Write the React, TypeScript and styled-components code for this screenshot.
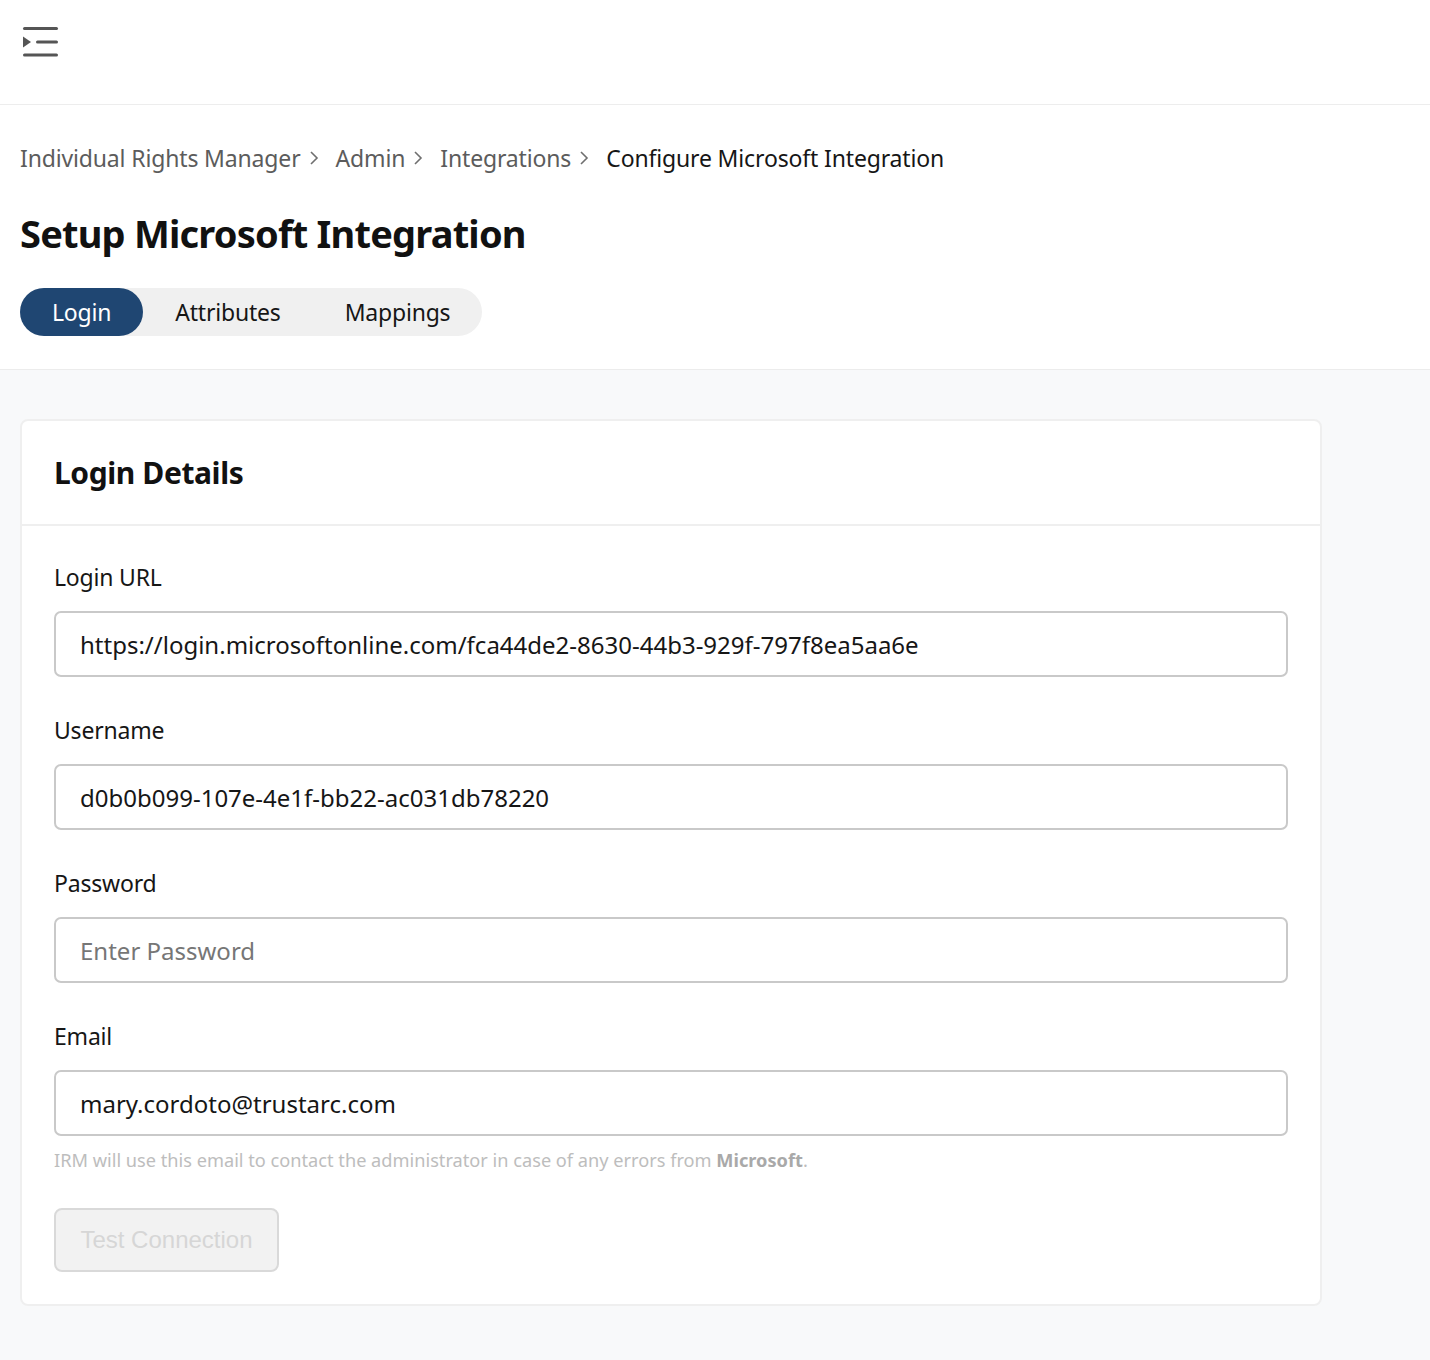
import styled, { createGlobalStyle } from 'styled-components';

const GlobalStyle = createGlobalStyle`
  html, body {
    margin: 0;
    padding: 0;
    background: #f8f9fa;
  }
  body {
    font-family: 'Noto Sans', 'Liberation Sans', sans-serif;
    color: #161616;
  }
  * {
    box-sizing: border-box;
  }
`;

const Page = styled.div`
  min-height: 1360px;
  display: flex;
  flex-direction: column;
  background: #f8f9fa;
`;

const TopBar = styled.header`
  height: 105px;
  background: #fff;
  border-bottom: 1px solid #ededed;
  display: flex;
  align-items: flex-start;
  padding: 24px 0 0 20px;
`;

const MenuButton = styled.button`
  width: 42px;
  height: 36px;
  padding: 0;
  border: none;
  background: transparent;
  cursor: pointer;
`;

const PageHead = styled.section`
  background: #fff;
  border-bottom: 1px solid #ececec;
  padding: 37px 20px 33px;
  display: flex;
  flex-direction: column;
  align-items: flex-start;
`;

const Crumbs = styled.nav`
  display: flex;
  align-items: center;
  height: 32px;
  font-size: 23px;
  letter-spacing: -0.15px;
  line-height: 32px;
`;

const Crumb = styled.a<{ current?: boolean }>`
  color: ${({ current }) => (current ? '#161616' : '#5c5c5c')};
  text-decoration: none;
  white-space: nowrap;
`;

const Chevron = styled.span`
  display: inline-flex;
  margin: 0 17px 0 8px;
  color: #6f6f6f;
`;

const Title = styled.h1`
  margin: 35px 0 0;
  font-size: 38px;
  letter-spacing: -0.8px;
  line-height: 48px;
  font-weight: 700;
  color: #111;
`;

const Tabs = styled.div`
  margin-top: 31px;
  display: flex;
  background: #f0f0f0;
  border-radius: 24px;
  height: 48px;
`;

const Tab = styled.button<{ active?: boolean }>`
  height: 48px;
  padding: 0 32px;
  border: none;
  border-radius: 24px;
  font-family: inherit;
  font-size: 23px;
  letter-spacing: -0.2px;
  cursor: pointer;
  background: ${({ active }) => (active ? '#1f4672' : 'transparent')};
  color: ${({ active }) => (active ? '#fff' : '#161616')};
`;

const Content = styled.main`
  padding: 49px 108px 56px 20px;
`;

const Card = styled.section`
  background: #fff;
  border: 2px solid #efefef;
  border-radius: 8px;
`;

const CardHeader = styled.div`
  height: 105px;
  padding: 0 32px;
  display: flex;
  align-items: center;
  border-bottom: 2px solid #efefef;
`;

const CardTitle = styled.h2`
  margin: 0;
  font-size: 30px;
  letter-spacing: -0.4px;
  font-weight: 700;
  color: #111;
`;

const CardBody = styled.div`
  padding: 35px 32px 32px;
  display: flex;
  flex-direction: column;
`;

const Field = styled.div`
  display: flex;
  flex-direction: column;
  & + & {
    margin-top: 37px;
  }
`;

const Label = styled.label`
  font-size: 23px;
  letter-spacing: -0.2px;
  line-height: 32px;
  color: #161616;
  margin-bottom: 18px;
`;

const Input = styled.input`
  height: 66px;
  width: 100%;
  border: 2px solid #c9c9c9;
  border-radius: 7px;
  padding: 0 24px;
  font-family: inherit;
  font-size: 24px;
  color: #161616;
  background: #fff;
  outline: none;
  &::placeholder {
    color: #767676;
  }
`;

const Hint = styled.p`
  margin: 12px 0 0;
  font-size: 18.2px;
  line-height: 24px;
  color: #bdbdbd;
  b {
    color: #a9a9a9;
    font-weight: 700;
  }
`;

const TestButton = styled.button`
  margin-top: 36px;
  align-self: flex-start;
  width: 225px;
  height: 64px;
  border: 2px solid #d9d9d9;
  border-radius: 8px;
  background: #f2f2f2;
  color: #d6d6d6;
  font-family: 'Liberation Sans', Arial, sans-serif;
  font-size: 24px;
  cursor: not-allowed;
`;

const MenuIcon = () => (
  <svg width='42' height='36' viewBox='0 0 42 36'>
    <g stroke='#555' strokeWidth='3' strokeLinecap='round' fill='none'>
      <line x1='4.5' y1='4.5' x2='36.5' y2='4.5' />
      <line x1='17.5' y1='18' x2='36.5' y2='18' />
      <line x1='4.5' y1='31' x2='36.5' y2='31' />
    </g>
    <path d='M3 12.5 L11 18 L3 23.5 Z' fill='#555' />
  </svg>
);

const ChevronIcon = () => (
  <svg width='10' height='16' viewBox='0 0 10 16'>
    <path d='M2 2 L8 8 L2 14' stroke='currentColor' strokeWidth='1.6' fill='none' />
  </svg>
);

const crumbs = ['Individual Rights Manager', 'Admin', 'Integrations'];

const fields = [
  { label: 'Login URL', value: 'https://login.microsoftonline.com/fca44de2-8630-44b3-929f-797f8ea5aa6e' },
  { label: 'Username', value: 'd0b0b099-107e-4e1f-bb22-ac031db78220' },
  { label: 'Password', value: '', placeholder: 'Enter Password', type: 'password' },
  { label: 'Email', value: 'mary.cordoto@trustarc.com' },
];

const App = () => {
  return (
    <Page>
      <GlobalStyle />
      <TopBar>
        <MenuButton aria-label='Toggle menu'>
          <MenuIcon />
        </MenuButton>
      </TopBar>
      <PageHead>
        <Crumbs>
          {crumbs.map((c) => (
            <span key={c} style={{ display: 'contents' }}>
              <Crumb href='#'>{c}</Crumb>
              <Chevron>
                <ChevronIcon />
              </Chevron>
            </span>
          ))}
          <Crumb current>Configure Microsoft Integration</Crumb>
        </Crumbs>
        <Title>Setup Microsoft Integration</Title>
        <Tabs>
          <Tab active>Login</Tab>
          <Tab>Attributes</Tab>
          <Tab>Mappings</Tab>
        </Tabs>
      </PageHead>
      <Content>
        <Card>
          <CardHeader>
            <CardTitle>Login Details</CardTitle>
          </CardHeader>
          <CardBody>
            {fields.map((f) => (
              <Field key={f.label}>
                <Label>{f.label}</Label>
                <Input
                  type={f.type || 'text'}
                  defaultValue={f.value}
                  placeholder={f.placeholder}
                />
              </Field>
            ))}
            <Hint>
              IRM will use this email to contact the administrator in case of any errors from{' '}
              <b>Microsoft</b>.
            </Hint>
            <TestButton disabled>Test Connection</TestButton>
          </CardBody>
        </Card>
      </Content>
    </Page>
  );
};

export default App;
